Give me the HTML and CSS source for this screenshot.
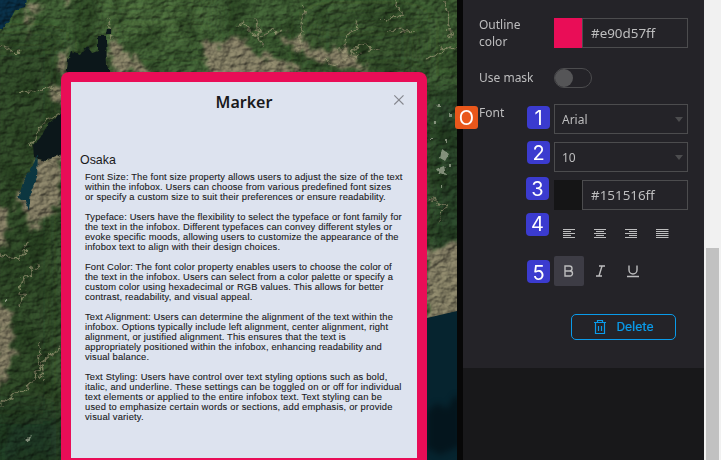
FILE: index.html
```html
<!DOCTYPE html>
<html lang="en">
<head>
<meta charset="utf-8">
<title>Marker settings</title>
<link rel="stylesheet" href="styles.css">
</head>
<body>
<div class="app">
  <main class="map">
    <svg class="terrain" width="457" height="460" viewBox="0 0 457 460" aria-hidden="true">
      <defs>
        <filter id="relief" x="0" y="0" width="100%" height="100%" color-interpolation-filters="sRGB">
          <feTurbulence type="fractalNoise" baseFrequency=".11 .17" numOctaves="4" seed="8"/>
          <feDiffuseLighting surfaceScale="2.6" lighting-color="#fff" diffuseConstant=".64"><feDistantLight azimuth="220" elevation="50"/></feDiffuseLighting>
          <feGaussianBlur stdDeviation=".5"/>
        </filter>
        <filter id="patch" x="0" y="0" width="100%" height="100%" color-interpolation-filters="sRGB">
          <feTurbulence type="fractalNoise" baseFrequency=".04" numOctaves="5" seed="4"/>
          <feColorMatrix values="0 0 0 0 .1  0 0 0 0 .18  0 0 0 0 .08  3.2 0 0 0 -1.3"/>
        </filter>
        <filter id="rough" x="-10%" y="-10%" width="120%" height="120%" color-interpolation-filters="sRGB">
          <feTurbulence type="fractalNoise" baseFrequency=".12" numOctaves="4" seed="3" result="n"/>
          <feDisplacementMap in="SourceGraphic" in2="n" scale="24" xChannelSelector="R" yChannelSelector="G"/>
          <feGaussianBlur stdDeviation="1.5"/>
        </filter>
        <filter id="road" x="-10%" y="-10%" width="120%" height="120%" color-interpolation-filters="sRGB">
          <feTurbulence type="fractalNoise" baseFrequency=".12" numOctaves="4" seed="5" result="n"/>
          <feDisplacementMap in="SourceGraphic" in2="n" scale="14" xChannelSelector="R" yChannelSelector="G"/>
          <feGaussianBlur stdDeviation=".7"/>
        </filter>
        <filter id="shore" color-interpolation-filters="sRGB"><feTurbulence type="fractalNoise" baseFrequency=".2" numOctaves="2" result="n"/><feDisplacementMap in="SourceGraphic" in2="n" scale="4" xChannelSelector="R" yChannelSelector="G"/><feGaussianBlur stdDeviation=".6"/></filter>
        <filter id="soft"><feGaussianBlur stdDeviation="12"/></filter>
      </defs>
      <rect width="457" height="460" fill="#3d5b32"/>
      <g filter="url(#soft)">
        <path d="M-20 40H60V480H-20Z" fill="#2f4728"/>
        <path d="M427 90H480V260H427Z" fill="#253f27"/>
        <path d="M310 20H420V75H310Z" fill="#344f29"/>
        <path d="M100-10H210V40H100Z" fill="#466639"/>
        <path d="M-10 410H70V480H-10Z" fill="#1e3620"/>
      </g>
      <rect width="457" height="460" filter="url(#patch)" opacity=".5"/>
      <g filter="url(#rough)" fill="#8b8069" opacity=".85">
        <path d="M203 40 226 47 239 36 254 50 275 60 300 67 310 80H210ZM111 35 119 43 124 54 143 62 147 72H112ZM69 48 60 56 53 73 66 75ZM220 45 238 36 250 55 285 66 330 76 205 76ZM275 34 298 38 320 52 338 48 350 54 370 67 350 71 325 61 305 57 286 45Z"/>
        <path d="M62 154 44 158 28 178 18 194 16 205 27 212 33 230 62 204ZM50 85 61 86 61 108 51 100ZM-5 303 10 311 14 355 5 380-5 390ZM427 252 465 238 465 320 427 325Z"/>
        <path d="M-5 205 7 208 4 245-5 250ZM28 0 43 5 32 12 28 38 26 15ZM64-3 72-3 68 7Z"/>
      </g>
      <g filter="url(#road)" fill="none" stroke="#8f8b6c" stroke-width="1.7" opacity=".7">
        <path d="M0 47 20 53M108 20 113 39M255 18 263 48M303 8 302 31 299 52M340 54 349 34 359 21M345 55 362 46 383 51M395 0 402 15 385 20M445 4 448 28 453 36M240 22 258 38 280 30M318 58 333 64 360 55M390 30 415 31M428 58 445 48 457 43"/>
        <path d="M0 255 20 258 27 243M0 405 28 388 45 358 62 348M20 305 24 280 37 265M37 340 42 380M20 93 37 91 47 86 60 94M427 197 445 205 436 226M32 145 40 128 60 113"/>
      </g>
      <path d="M-5-5H28L25 7 15 10 10 20 2 29H-5Z" fill="#082c42" filter="url(#shore)"/>
      <g class="shade"><rect width="457" height="460" filter="url(#relief)"/></g>
      <g filter="url(#shore)">
        <path d="M66 77 68 60 71 51 80 55 87 46 92 53 98 51 98 36 106 36 107 66 113 77ZM62 113 49 123 40 138 33 145 34 157 45 161 62 154Z" fill="#0c171a"/>
        <path d="M38 153 34 163 23 183 18 198 25 201 29 210 31 191 37 177Z" fill="#0c3640"/>
        <path d="M107 29h4v5h-5Z" fill="#0c171a"/>
      </g>
      <path d="M427 318 457 311V460H427Z" fill="#06242f"/>
      <path class="murk" d="M427 412 437 403 447 409 455 395 462 400V445L440 455 427 448Z"/>
      <g class="specks" filter="url(#shore)">
        <path d="M438 104h2v4h-3ZM449 113h3v4h-3ZM434 121h2v3h-2ZM445 139h2v4h-2ZM442 149 449 154 445 161 440 158ZM436 169 444 166 446 175 439 173ZM441 185h2v3h-2ZM25 439 32 436 29 442ZM431 137h2v2h-2ZM449 164h3v3h-3ZM5 299h2v3H5Z"/>
      </g>
    </svg>
    <section class="popup">
      <div class="popup-body">
        <header class="popup-head">
          <h1>Marker</h1>
          <svg class="close" width="12" height="12" viewBox="0 0 12 12"><path d="M1.3 1.3l9.2 9.2M10.5 1.3l-9.2 9.2"/></svg>
        </header>
        <h2>Osaka</h2>
        <div class="copy">
          <p>Font Size: The font size property allows users to adjust the size of the text<br>within the infobox. Users can choose from various predefined font sizes<br>or specify a custom size to suit their preferences or ensure readability.</p>
          <p>Typeface: Users have the flexibility to select the typeface or font family for<br>the text in the infobox. Different typefaces can convey different styles or<br>evoke specific moods, allowing users to customize the appearance of the<br>infobox text to align with their design choices.</p>
          <p>Font Color: The font color property enables users to choose the color of<br>the text in the infobox. Users can select from a color palette or specify a<br>custom color using hexadecimal or RGB values. This allows for better<br>contrast, readability, and visual appeal.</p>
          <p>Text Alignment: Users can determine the alignment of the text within the<br>infobox. Options typically include left alignment, center alignment, right<br>alignment, or justified alignment. This ensures that the text is<br>appropriately positioned within the infobox, enhancing readability and<br>visual balance.</p>
          <p class="wide">Text Styling: Users have control over text styling options such as bold,<br>italic, and underline. These settings can be toggled on or off for individual<br>text elements or applied to the entire infobox text. Text styling can be<br>used to emphasize certain words or sections, add emphasis, or provide<br>visual variety.</p>
        </div>
      </div>
    </section>
  </main>
  <aside class="side">
    <div class="panel">
      <div class="row row-color">
        <span class="label">Outline color</span>
        <div class="color"><i class="swatch pink"></i><span class="hex">#e90d57ff</span></div>
      </div>
      <div class="row row-mask">
        <span class="label">Use mask</span>
        <span class="toggle"><i></i></span>
      </div>
      <div class="row row-font">
        <span class="label">Font<b class="badge orange">O</b></span>
        <div class="controls">
          <div class="control select"><b class="badge">1</b><span>Arial</span><i class="caret"></i></div>
          <div class="control select"><b class="badge n2">2</b><span>10</span><i class="caret"></i></div>
          <div class="control color"><b class="badge n3">3</b><i class="swatch black"></i><span class="hex">#151516ff</span></div>
          <div class="control tools">
            <b class="badge n4">4</b>
            <span class="tool"><svg width="14" height="12" viewBox="0 0 14 12"><path d="M1 1.5h12M1 3.5h8M1 5.5h12M1 7.5h8M1 9.5h12"/></svg></span>
            <span class="tool"><svg width="14" height="12" viewBox="0 0 14 12"><path d="M1 1.5h12M3 3.5h8M1 5.5h12M3 7.5h8M1 9.5h12"/></svg></span>
            <span class="tool"><svg width="14" height="12" viewBox="0 0 14 12"><path d="M1 1.5h12M5 3.5h8M1 5.5h12M5 7.5h8M1 9.5h12"/></svg></span>
            <span class="tool"><svg width="14" height="12" viewBox="0 0 14 12"><path d="M1 1.5h12.5M1 3.5h12.5M1 5.5h12.5M1 7.5h12.5M1 9.5h12.5"/></svg></span>
          </div>
          <div class="control tools styles">
            <b class="badge n5">5</b>
            <span class="tool active"><svg class="glyph" width="16" height="16" viewBox="0 0 16 16"><path d="M4 3h4.5a2.3 2.3 0 0 1 0 5H4ZM4 8h5a2.5 2.5 0 0 1 0 5H4Z"/></svg></span>
            <span class="tool"><svg class="glyph" width="16" height="16" viewBox="0 0 16 16"><path d="M6 3h6M3 13h6M9 3 6 13"/></svg></span>
            <span class="tool"><svg class="glyph" width="16" height="16" viewBox="0 0 16 16"><path d="M4 2.5v4.500a4 4 0 0 0 8 0V2.500M2 13.500h12"/></svg></span>
          </div>
        </div>
      </div>
      <div class="delete">
        <svg width="14" height="16" viewBox="0 0 14 16"><path d="M1 3.500h12M4.500 3.500v-2h5v2M2.500 4v10.500h9V4M5.500 7v5M8.500 7v5"/></svg>
        <span>Delete</span>
      </div>
    </div>
  </aside>
  <div class="scrollbar"><i></i></div>
</div>
</body>
</html>
```
FILE: styles.css
```css
* { box-sizing: border-box; }
body { margin: 0; overflow: hidden; font-family: "Noto Sans", sans-serif; }
.app { display: flex; width: 721px; height: 460px; }
.map { position: relative; flex: 0 0 457px; overflow: hidden; padding: 72px 0 0 61px; background: #304728; }
.terrain { position: absolute; top: 0; left: 0; }
.shade { mix-blend-mode: overlay; opacity: .65; }
.murk { fill: #041219; filter: blur(3px); opacity: .8; }
.specks { fill: #a1aa96; opacity: .75; }
.popup { position: relative; width: 366px; height: 396px; padding: 10px; border-radius: 8px; background: #e90d57; }
.popup-body { height: 376px; background: #dde3ef; color: #19191b; }
.popup-head { position: relative; height: 68px; padding-top: 9px; }
h1 { margin: 0; font-size: 16px; line-height: 22px; font-weight: 600; text-align: center; }
.close { position: absolute; top: 12px; right: 12px; fill: none; stroke: #85878e; stroke-width: 1.1; }
h2 { margin: 0; padding-left: 9px; font: 12.4px/20px "Liberation Sans", Arial, sans-serif; }
.copy { padding: 2px 0 0 14px; font: 9.35px/10px "Liberation Sans", Arial, sans-serif; letter-spacing: .16px; white-space: nowrap; -webkit-text-stroke: .1px #19191b; }
.copy p { margin: 0 0 10px; }
.copy .wide { letter-spacing: .19px; }
.side { flex: 0 0 247px; border-left: 6px solid #070707; background: #18181a; color: #bdbdbe; }
.panel { height: 368px; padding: 17px 16px 0; background: #242328; }
.row { display: flex; }
.label { position: relative; flex: 0 0 75px; font-size: 12px; line-height: 17px; }
.row-color { height: 51px; }
.row-color .label { margin-top: -1px; padding-right: 20px; }
.row-color .color { margin-top: 1px; }
.row-mask { height: 36px; }
.row-mask .label { padding-top: 1px; }
.toggle { width: 38px; height: 20px; border: 1px solid #4c4c4e; border-radius: 10px; }
.toggle i { display: block; width: 18px; height: 18px; border-radius: 50%; background: #555557; }
.controls { display: flex; flex-direction: column; gap: 8px; }
.control { position: relative; width: 134px; height: 30px; }
.color { display: flex; width: 134px; height: 30px; }
.swatch { width: 28px; height: 30px; }
.pink { background: #e90d57; }
.black { background: #151516; }
.hex { flex: 1; padding-left: 8px; border: 1px solid #4c4c4e; font-size: 13.4px; line-height: 28px; }
.select { display: flex; align-items: center; justify-content: space-between; padding: 0 4px 0 7px; border: 1px solid #4c4c4e; font-size: 12px; }
.caret { border: 4.5px solid transparent; border-top: 5px solid #4c4c4e; border-bottom: 0; }
.badge { position: absolute; top: 2px; left: -27px; width: 23px; height: 23px; border-radius: 4px; background: #3b3bcf; color: #fff; font: 20px/24px Inter, sans-serif; text-align: center; }
.select .badge { top: 1px; left: -28px; }
.select .n2 { top: -2px; }
.n3 { top: -3px; left: -28px; }
.n4 { top: -5px; left: -28px; line-height: 22px; }
.n5 { top: 4px; line-height: 26px; }
.orange { top: 2px; left: -24px; border-radius: 3px; background: #e9571b; }
.tools { display: flex; gap: 1px; }
.styles { gap: 2px; }
.tool { display: flex; align-items: center; justify-content: center; width: 30px; height: 30px; border-radius: 2px; }
.tool svg { margin-top: 1px; fill: none; stroke: #bdbdbe; stroke-width: 1.2; }
.tool .glyph { margin-top: 0; stroke-width: 1.4; }
.active { background: #3d3c45; }
.delete { display: flex; align-items: center; justify-content: center; gap: 9px; width: 105px; height: 26px; margin: 28px 0 0 92px; border: 1px solid #0a9bea; border-radius: 5px; color: #0a9bea; font: 13.2px/24px Roboto, sans-serif; -webkit-text-stroke: .2px #0a9bea; }
.delete svg { fill: none; stroke: #0a9bea; stroke-width: 1.2; }
.scrollbar { flex: 1; padding: 248px 2px 0; background: #f1f1f1; }
.scrollbar i { display: block; height: 212px; background: #c1c1c1; }
```
